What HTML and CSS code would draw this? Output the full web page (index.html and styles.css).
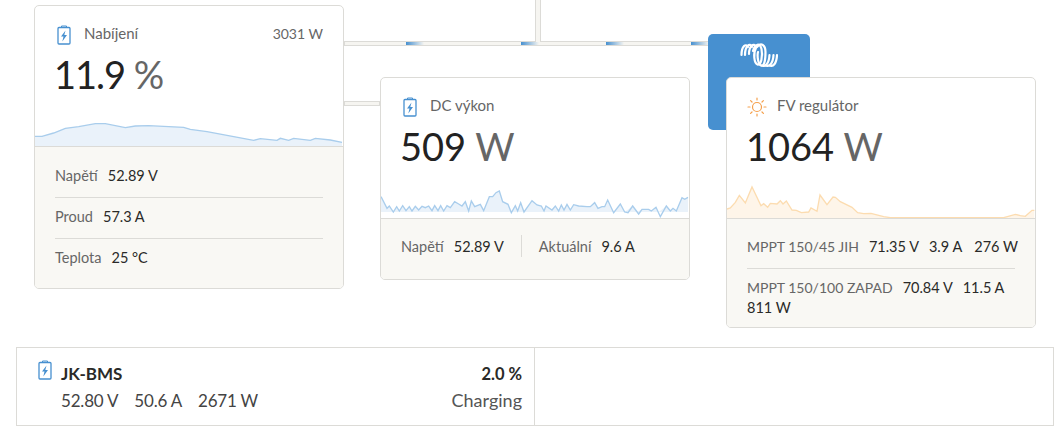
FILE: index.html
```html
<!DOCTYPE html>
<html lang="en">
<head>
  <meta charset="UTF-8">
  <title>Přehled</title>
  <link rel="stylesheet" href="styles.css">
</head>
<body>

  <svg width="0" height="0" class="defs">
    <symbol id="battery" viewBox="0 0 14 20">
      <path d="M4.500 2.500V1h5v1.500" fill="none" stroke="#4790d0" stroke-width="1"/>
      <rect x="1" y="2.500" width="12" height="16.500" rx="1" fill="#fff" stroke="#4790d0" stroke-width="1.300"/>
      <path d="M8.500 5.500 4 11.500h2.500L5.300 16.500 10 10H7.300z" fill="#4790d0"/>
    </symbol>
  </svg>

  <div class="overview">
    <!-- connectors between the nodes -->
    <div class="wire wire-top"></div>
    <div class="wire wire-main">
      <span class="pulse pulse-a"></span>
      <span class="pulse pulse-b"></span>
      <span class="pulse pulse-c"></span>
      <span class="pulse pulse-d"></span>
    </div>
    <div class="wire wire-dc"></div>

    <div class="inverter">
      <svg class="logo" viewBox="0 0 38 24" fill="none" stroke="#fff" stroke-width="2.200" stroke-linecap="round">
        <path d="M1.500 12C1.500 3 6 0 8 4"/>
        <path d="M5 12C5 3 10-1 12 4"/>
        <path d="M9 11C9 3 14-1 16 4"/>
        <path d="M13 8C15 0 20 0 21.500 6C23 13 21 23 17.500 21.500C14 20 13 10 16 5"/>
        <path d="M17 4C21-1 25.500 2 25.500 9C25.500 18 24 24 21 22.500C18 21 17 13 18 9"/>
        <path d="M22 22.500C25 24 29 21 29.500 12"/>
        <path d="M25.500 22.500C29 24 33 21 33.500 12"/>
        <path d="M29.500 22.500C33 24 36.500 21 37 12"/>
      </svg>
    </div>

    <section class="card card-battery">
      <div class="card-top">
        <div class="card-title">
          <svg class="icon"><use href="#battery"/></svg>
          <span>Nabíjení</span>
          <span class="title-right">3031 W</span>
        </div>
        <div class="big big-tight">11.9 <span class="unit">%</span></div>
        <svg class="chart chart-blue" viewBox="44 360 924 78" preserveAspectRatio="none">
          <path class="area" d="M44 409L65 409 100 399 135 385 175 380 225 371 255 371 315 383 345 378 385 377 490 382 510 388 560 395 620 406 700 421 720 416 770 421 780 415 805 421 820 415 870 421 885 415 930 420 965 427V438H44z"/>
          <path class="line" d="M44 409L65 409 100 399 135 385 175 380 225 371 255 371 315 383 345 378 385 377 490 382 510 388 560 395 620 406 700 421 720 416 770 421 780 415 805 421 820 415 870 421 885 415 930 420 965 427"/>
        </svg>
      </div>
      <div class="card-foot foot-rows">
        <div class="row"><span class="lbl">Napětí</span><span>52.89 V</span></div>
        <div class="row"><span class="lbl">Proud</span><span>57.3 A</span></div>
        <div class="row"><span class="lbl">Teplota</span><span>25 °C</span></div>
      </div>
    </section>

    <section class="card card-dc">
      <div class="card-top">
        <div class="card-title">
          <svg class="icon"><use href="#battery"/></svg>
          <span>DC výkon</span>
        </div>
        <div class="big">509 <span class="unit">W</span></div>
        <svg class="chart chart-blue chart-dc" viewBox="17 50 924 84" preserveAspectRatio="none">
          <path class="area" d="M17 70L35 105 42 98 54 116 64 100 72 113 82 97 92 112 102 100 110 113 120 99 130 110 140 99 150 103 160 98 170 112 178 97 188 112 196 97 205 113 215 97 225 103 238 85 250 92 260 98 270 85 280 113 288 83 298 100 315 93 325 112 342 70 352 70 362 58 372 53 382 85 398 93 408 116 420 97 427 113 436 88 446 116 470 82 485 95 498 98 506 113 512 98 530 110 540 98 550 113 558 95 566 110 575 93 585 110 595 94 610 98 635 100 645 100 658 88 668 105 680 100 688 100 697 80 715 116 735 92 748 116 772 98 785 116 800 108 820 108 828 113 842 102 850 116 873 98 885 113 893 105 903 113 920 73 928 78 938 72V116H17z"/>
          <path class="line" d="M17 70L35 105 42 98 54 116 64 100 72 113 82 97 92 112 102 100 110 113 120 99 130 110 140 99 150 103 160 98 170 112 178 97 188 112 196 97 205 113 215 97 225 103 238 85 250 92 260 98 270 85 280 113 288 83 298 100 315 93 325 112 342 70 352 70 362 58 372 53 382 85 398 93 408 118 420 97 427 113 436 88 446 116 470 82 485 95 498 98 506 113 512 98 530 110 540 98 550 113 558 95 566 110 575 93 585 110 595 94 610 98 635 100 645 100 658 88 668 105 680 100 688 100 697 80 715 118 735 92 748 116 758 118 772 98 790 122 800 108 820 108 828 113 842 102 855 130 873 98 885 113 893 105 903 113 920 73 928 78 938 72"/>
        </svg>
      </div>
      <div class="card-foot foot-inline">
        <span class="lbl">Napětí</span><span>52.89 V</span>
        <i class="sep"></i>
        <span class="lbl">Aktuální</span><span>9.6 A</span>
      </div>
    </section>

    <section class="card card-pv">
      <div class="card-top">
        <div class="card-title">
          <svg class="icon icon-sun" viewBox="0 0 20 20" fill="none" stroke="#f5a04c" stroke-width="1.200" stroke-linecap="round">
            <circle cx="10" cy="10" r="4.500"/>
            <path d="M10 1v2M10 17v2M1 10h2M17 10h2M3.600 3.600 5 5M15 15l1.400 1.400M3.600 16.400 5 15M15 5l1.400-1.400"/>
          </svg>
          <span>FV regulátor</span>
        </div>
        <div class="big">1064 <span class="unit">W</span></div>
        <svg class="chart chart-orange" viewBox="20 46 924 99" preserveAspectRatio="none">
          <path class="area" d="M20 118L30 115 45 98 57 77 75 100 95 52 122 108 130 102 142 113 150 101 170 103 180 93 188 103 198 94 215 121 228 122 243 129 265 127 272 115 290 125 299 76 320 105 338 82 345 83 360 96 395 113 412 129 430 132 452 131 490 141 510 144 850 144 885 134 900 138 915 140 935 122 942 122V145H20z"/>
          <path class="line" d="M20 118L30 115 45 98 57 77 75 100 95 52 122 108 130 102 142 113 150 101 170 103 180 93 188 103 198 94 215 121 228 122 243 129 265 127 272 115 290 125 299 76 320 105 338 82 345 83 360 96 395 113 412 129 430 132 452 131 490 141 510 144 850 144 885 134 900 138 915 140 935 122 942 122"/>
        </svg>
      </div>
      <div class="card-foot foot-rows foot-pv">
        <div class="row row-single"><span class="lbl">MPPT 150/45 JIH</span><span>71.35 V</span><span>3.9 A</span><span class="watts">276 W</span></div>
        <div class="row"><span class="lbl">MPPT 150/100 ZAPAD</span><span>70.84 V</span><span>11.5 A</span><span>811 W</span></div>
      </div>
    </section>
  </div>

  <div class="devices">
    <div class="device">
      <svg class="icon device-icon"><use href="#battery"/></svg>
      <div class="device-main">
        <div class="device-name">JK-BMS</div>
        <div class="device-vals"><span>52.80 V</span><span>50.6 A</span><span>2671 W</span></div>
      </div>
      <div class="device-side">
        <div class="device-soc">2.0 %</div>
        <div class="device-state">Charging</div>
      </div>
    </div>
    <div class="device"></div>
  </div>

</body>
</html>
```

FILE: styles.css
```css
body { margin: 0; font-family: Lato, "Open Sans", sans-serif; color: #2a2a28; background: #fff; font-size: 14.5px; }
.defs { position: absolute; }

.overview { position: relative; height: 347px; overflow: hidden; }

.wire { position: absolute; box-sizing: border-box; background: #f6f5f1; border: 1px solid #dcdbd7; }
.wire-top { left: 535px; top: -2px; width: 6px; height: 44px; border-bottom: none; z-index: 1; }
.wire-main { left: 344px; top: 41px; width: 364px; height: 5px; }
.wire-dc { left: 344px; top: 101px; width: 36px; height: 5px; }
.pulse { position: absolute; top: 0; height: 3px; width: 18px; background: linear-gradient(to right, #4790d0, #f6f5f1); }
.pulse-a { left: 61px; }
.pulse-b { left: 176px; }
.pulse-c { left: 261px; }
.pulse-d { left: 346px; }

.inverter { position: absolute; left: 708px; top: 34px; width: 102px; height: 96px; background: #4790d0; border-radius: 5px; }
.logo { display: block; width: 38px; height: 24px; margin: 9px 0 0 32px; }

.card { position: absolute; box-sizing: border-box; width: 310px; display: flex; flex-direction: column; background: #fff; border: 1px solid #dcdbd7; border-radius: 5px; overflow: hidden; }
.card-battery { left: 34px; top: 5px; height: 284px; }
.card-dc { left: 380px; top: 77px; height: 203px; }
.card-pv { left: 726px; top: 77px; height: 251px; }

.card-top { position: relative; height: 141px; box-sizing: border-box; padding: 16px 20px 0; border-bottom: 1px solid #dcdbd7; flex: none; }
.card-title { display: flex; align-items: center; gap: 13px; height: 22px; color: #666; font-size: 15px; }
.title-right { margin-left: auto; font-size: 14px; }
.icon { width: 14px; height: 20px; flex: none; margin: 3px 0 0 2px; }
.icon-sun { width: 20px; height: 20px; margin: 3px -3px 0 0; }
.big { font-size: 38px; line-height: 46px; margin: 7px 0 0 -1px; color: #222; }
.big-tight { letter-spacing: -1px; }
.unit { color: #666; }

.chart { position: absolute; left: 0; bottom: 0; width: 308px; height: 26px; display: block; }
.chart-dc { height: 28px; }
.chart-orange { height: 33px; }
.chart .line { fill: none; stroke-width: 4px; }
.chart-blue .area { fill: #eaf2fa; }
.chart-blue .line { stroke: #a9cdec; }
.chart-orange .area { fill: #fef5e9; }
.chart-orange .line { stroke: #fcdcb0; }

.card-foot { flex: 1; background: #f9f8f4; padding: 0 20px; }
.lbl { color: #666; }
.foot-rows { display: flex; flex-direction: column; padding-top: 10px; }
.row { display: flex; flex-wrap: wrap; column-gap: 10px; padding: 11px 0 14px; line-height: 15px; border-bottom: 1px solid #dcdbd7; }
.row:last-child { border-bottom: none; }
.foot-pv { padding-top: 9px; }
.foot-pv .row { line-height: 20px; padding: 9px 0 11px; }
.foot-pv .row-single { flex-wrap: nowrap; white-space: nowrap; }
.foot-pv .lbl { font-size: 14px; }
.watts { margin-left: 2px; }
.foot-inline { display: flex; align-items: center; gap: 10px; padding-bottom: 6px; }
.sep { width: 1px; height: 22px; background: #dcdbd7; margin: 0 7px; }

.devices { display: flex; margin: 0 5px 0 16px; height: 79px; box-sizing: border-box; border: 1px solid #dcdbd7; }
.device { flex: 1; display: flex; padding: 12px 12px 0 20px; }
.device:first-child { flex: none; width: 518px; box-sizing: border-box; border-right: 1px solid #dcdbd7; }
.device-icon { margin: 0 0 0 1px; }
.device-main { flex: 1; margin-left: 9px; }
.device-name { font-size: 17px; font-weight: 700; line-height: 28px; }
.device-vals { display: flex; gap: 16px; font-size: 17px; line-height: 26px; color: #444; letter-spacing: -.2px; }
.device-side { text-align: right; }
.device-soc { font-size: 16.5px; font-weight: 700; line-height: 28px; }
.device-state { font-size: 18px; line-height: 24px; color: #555; }
```
